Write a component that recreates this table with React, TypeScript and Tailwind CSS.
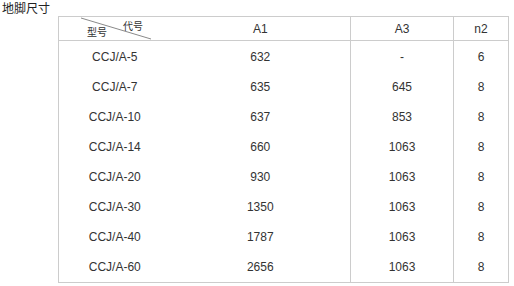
const rows = [
  ["CCJ/A-5", "632", "-", "6"],
  ["CCJ/A-7", "635", "645", "8"],
  ["CCJ/A-10", "637", "853", "8"],
  ["CCJ/A-14", "660", "1063", "8"],
  ["CCJ/A-20", "930", "1063", "8"],
  ["CCJ/A-30", "1350", "1063", "8"],
  ["CCJ/A-40", "1787", "1063", "8"],
  ["CCJ/A-60", "2656", "1063", "8"],
];

export default function App() {
  return (
    <div className="w-[514px] h-[286px] bg-white font-['Liberation_Sans','Noto_Sans_CJK_SC',sans-serif] text-[12px] text-[#333]">
      <div className="h-[16px] pt-[2px] pl-[2px] leading-[14px] text-[#222]">地脚尺寸</div>
      <table className="ml-[58px] w-[450px] border-collapse border border-[#ccc] table-fixed">
        <colgroup>
          <col className="w-[112px]" />
          <col className="w-[180px]" />
          <col className="w-[103px]" />
          <col className="w-[55px]" />
        </colgroup>
        <thead>
          <tr className="h-[24px] border-b border-[#ccc]">
            <th className="relative p-0 font-normal">
              <svg className="absolute left-0 top-0" width="112" height="24">
                <line x1="22" y1="1" x2="92" y2="22" stroke="#8a8a8a" strokeWidth="1" />
              </svg>
              <span className="absolute left-[64px] top-[5px] text-[10px] leading-[10px]">代号</span>
              <span className="absolute left-[28px] top-[11px] text-[10px] leading-[10px]">型号</span>
            </th>
            <th className="p-0 font-normal text-center border-r border-[#ccc]">A1</th>
            <th className="p-0 font-normal text-center border-r border-[#ccc]">A3</th>
            <th className="p-0 font-normal text-center">n2</th>
          </tr>
        </thead>
        <tbody>
          {rows.map((r, i) => (
            <tr key={r[0]} className={i === rows.length - 1 ? "h-[32px]" : "h-[30px]"}>
              <td className="p-0 pt-[2px] text-center">{r[0]}</td>
              <td className="p-0 pt-[2px] text-center border-r border-[#ccc]">{r[1]}</td>
              <td className="p-0 pt-[2px] text-center border-r border-[#ccc]">{r[2]}</td>
              <td className="p-0 pt-[2px] text-center">{r[3]}</td>
            </tr>
          ))}
        </tbody>
      </table>
    </div>
  );
}
